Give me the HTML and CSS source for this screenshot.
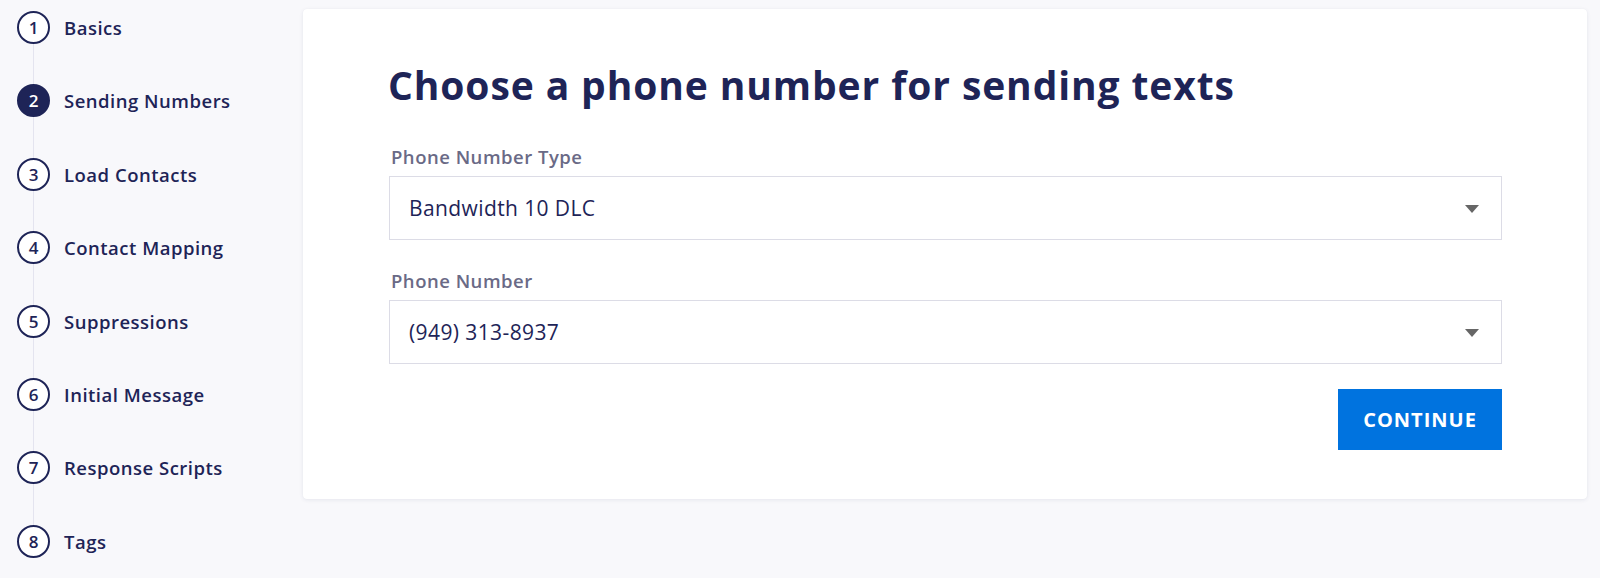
FILE: index.html
```html
<!DOCTYPE html>
<html lang="en">
<head>
<meta charset="utf-8">
<title>Sending Numbers</title>
<link rel="stylesheet" href="styles.css">
</head>
<body>
<div class="page">
  <nav class="steps">
    <ol class="step-list">
      <li class="step"><span class="step-num">1</span><span class="step-label">Basics</span></li>
      <li class="step step-active"><span class="step-num">2</span><span class="step-label">Sending Numbers</span></li>
      <li class="step"><span class="step-num">3</span><span class="step-label">Load Contacts</span></li>
      <li class="step"><span class="step-num">4</span><span class="step-label">Contact Mapping</span></li>
      <li class="step"><span class="step-num">5</span><span class="step-label">Suppressions</span></li>
      <li class="step"><span class="step-num">6</span><span class="step-label">Initial Message</span></li>
      <li class="step"><span class="step-num">7</span><span class="step-label">Response Scripts</span></li>
      <li class="step step-last"><span class="step-num">8</span><span class="step-label">Tags</span></li>
    </ol>
  </nav>
  <main class="card">
    <h1 class="title">Choose a phone number for sending texts</h1>
    <div class="field">
      <div class="field-label">Phone Number Type</div>
      <div class="select"><span class="select-value">Bandwidth 10 DLC</span><span class="caret"></span></div>
    </div>
    <div class="field">
      <div class="field-label">Phone Number</div>
      <div class="select"><span class="select-value">(949) 313-8937</span><span class="caret"></span></div>
    </div>
    <div class="actions">
      <button class="btn-continue" type="button">CONTINUE</button>
    </div>
  </main>
</div>
</body>
</html>
```
FILE: styles.css
```css
* { box-sizing: border-box; }
html, body {
  margin: 0;
  padding: 0;
  background: #f8f8fb;
  font-family: "Open Sans", "Noto Sans", sans-serif;
  color: #1e2457;
}
.page {
  display: flex;
  align-items: flex-start;
  width: 1600px;
  height: 578px;
  overflow: hidden;
}
.steps {
  width: 303px;
  flex: none;
  padding: 11px 0 0 17px;
}
.step-list {
  list-style: none;
  margin: 0;
  padding: 0;
  display: flex;
  flex-direction: column;
  gap: 40.4px;
}
.step {
  position: relative;
  display: flex;
  align-items: center;
  height: 33px;
  gap: 14px;
}
.step::after {
  content: "";
  position: absolute;
  left: 16px;
  top: 33px;
  width: 1px;
  height: 40.4px;
  background: #e4e4ef;
}
.step-last::after { display: none; }
.step-num {
  width: 33px;
  height: 33px;
  flex: none;
  border: 2.5px solid #1e2457;
  border-radius: 50%;
  background: #ffffff;
  display: flex;
  align-items: center;
  justify-content: center;
  font-size: 17px;
  font-weight: 600;
  color: #1e2457;
  line-height: 1;
}
.step-active .step-num {
  background: #1e2457;
  color: #ffffff;
}
.step-label {
  font-size: 18.5px;
  font-weight: 600;
  letter-spacing: 0.5px;
  color: #1e2457;
  white-space: nowrap;
}
.card {
  margin-top: 9px;
  width: 1284px;
  height: 490px;
  flex: none;
  background: #ffffff;
  border-radius: 4px;
  box-shadow: 0 1px 4px rgba(30, 36, 87, 0.08), 0 0 1px rgba(30, 36, 87, 0.06);
  padding: 50px 85px 0 86px;
}
.title {
  margin: 0 0 0 -1px;
  font-size: 39px;
  font-weight: 700;
  line-height: 52px;
  color: #1e2457;
  letter-spacing: 0.9px;
}
.title + .field { margin-top: 34px; }
.field + .field { margin-top: 29px; }
.field-label {
  margin-left: 2px;
  font-size: 18.5px;
  font-weight: 600;
  letter-spacing: 0.5px;
  color: #6a6a86;
  line-height: 24px;
  margin-bottom: 7px;
}
.select {
  height: 64px;
  border: 1px solid #dcdce6;
  background: #ffffff;
  display: flex;
  align-items: center;
  justify-content: space-between;
  padding: 0 22px 0 19px;
}
.select-value {
  font-size: 21px;
  font-weight: 400;
  letter-spacing: 0.4px;
  color: #1e2457;
}
.caret {
  width: 0;
  height: 0;
  border-left: 7px solid transparent;
  border-right: 7px solid transparent;
  border-top: 8px solid #666666;
  margin-top: 2px;
}
.actions {
  display: flex;
  justify-content: flex-end;
  margin-top: 25px;
}
.btn-continue {
  width: 164px;
  height: 61px;
  border: none;
  border-radius: 0;
  background: #0073df;
  color: #ffffff;
  font-family: "Open Sans", "Noto Sans", sans-serif;
  font-size: 20px;
  font-weight: 700;
  letter-spacing: 1px;
  cursor: pointer;
}
```
